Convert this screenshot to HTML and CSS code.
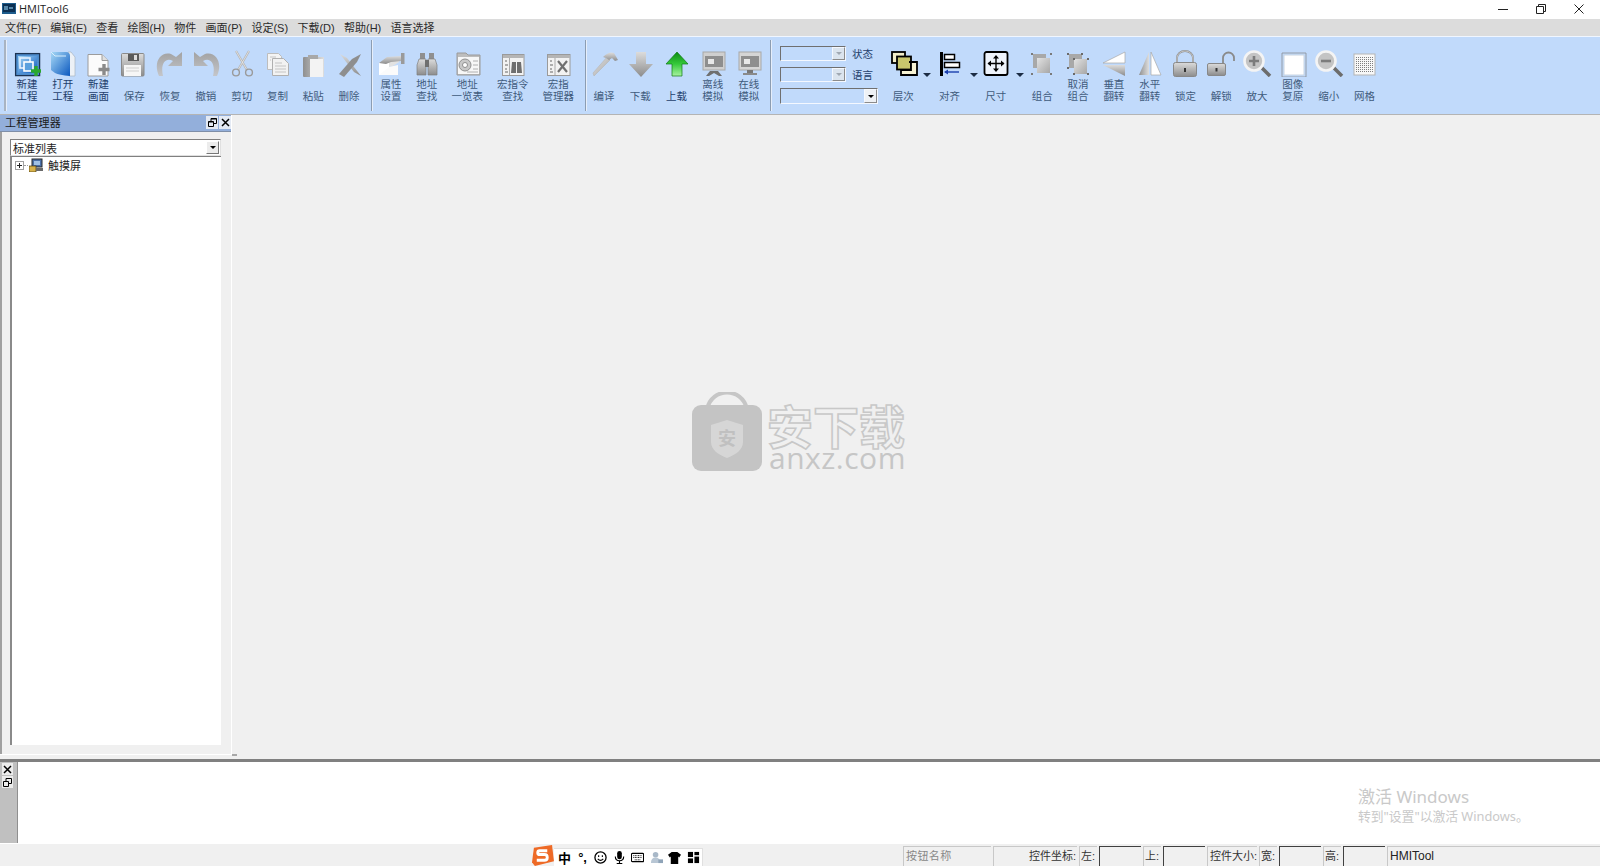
FILE: index.html
```html
<!DOCTYPE html>
<html lang="zh">
<head>
<meta charset="utf-8">
<title>HMITool6</title>
<link rel="stylesheet" href="styles.css">
</head>
<body>
<svg class="defs" aria-hidden="true">
<defs>
<linearGradient id="gGray" x1="0" y1="0" x2="0" y2="1"><stop offset="0" stop-color="#dcdcdc"/><stop offset="1" stop-color="#8c8c8c"/></linearGradient>
<linearGradient id="gArc" x1="0" y1="0" x2="0" y2="1"><stop offset="0" stop-color="#a2a2a2"/><stop offset="1" stop-color="#c4c6ca"/></linearGradient>
<linearGradient id="gSide" x1="0" y1="0" x2="1" y2="0"><stop offset="0" stop-color="#8f8f8f"/><stop offset="1" stop-color="#dedede"/></linearGradient>
<linearGradient id="gSoft" x1="0" y1="0" x2="1" y2="1"><stop offset="0" stop-color="#e2e2e2"/><stop offset="1" stop-color="#a6a6a6"/></linearGradient>
<linearGradient id="gBlue" x1="0" y1="0" x2="1" y2="1"><stop offset="0" stop-color="#a6d8f6"/><stop offset="1" stop-color="#0b58bf"/></linearGradient>
<linearGradient id="gGreen" x1="0" y1="0" x2="0" y2="1"><stop offset="0" stop-color="#0c8a12"/><stop offset=".5" stop-color="#35c93a"/><stop offset="1" stop-color="#a8f2a0"/></linearGradient>
<pattern id="pDots" width="2" height="2" patternUnits="userSpaceOnUse"><rect width="1" height="1" fill="#808080"/></pattern>

<symbol id="i-new" viewBox="0 0 32 28"><rect x="4.6" y="4.6" width="24" height="22" fill="#4f8fd0" stroke="#1c3352" stroke-width="1.3"/><rect x="7" y="7" width="19" height="17" fill="url(#gBlue)"/><rect x="9" y="9" width="10" height="10" fill="none" stroke="#e6f2ff" stroke-width="1.6"/><rect x="13" y="13" width="9" height="9" fill="#5aa0de" stroke="#fff" stroke-width="1.6"/><path d="M25 17v10M20 22h10" stroke="#2aa82e" stroke-width="3.4"/></symbol>
<symbol id="i-open" viewBox="0 0 32 28"><path d="M21 3h3l4 5v19h-6z" fill="#edf1f6" stroke="#a9b4c2" stroke-width=".7"/><path d="M4 3h15q4 0 4 4v20q-11-1-15-3l-4-3z" fill="url(#gBlue)"/><path d="M4 3l4 4h11" fill="none" stroke="#d8eefc"/></symbol>
<symbol id="i-newpage" viewBox="0 0 32 28"><path d="M6 5.5h14l6 6v15.500H6z" fill="#fbfbfb" stroke="#9c9c9c"/><path d="M20 5.500v6h6" fill="#dfdfdf" stroke="#9c9c9c"/><path d="M22 15v11M16.500 20.500h11" stroke="#8a8a8a" stroke-width="3.400"/></symbol>
<symbol id="i-save" viewBox="0 0 32 28"><rect x="3.500" y="4.500" width="22.500" height="22.500" rx="1" fill="url(#gGray)" stroke="#8a8a8a"/><rect x="10" y="5" width="11" height="7" fill="#5a5a5a"/><rect x="16" y="6" width="3" height="5" fill="#dcdcdc"/><rect x="6" y="16" width="17" height="11" fill="#f6f6f6"/><path d="M8 19h13M8 22h13" stroke="#cfcfcf"/></symbol>
<symbol id="i-redo" viewBox="0 0 32 28"><path d="M5 27C-1 14 6 2 17 5l5 3 6-5v14H14l5-5C12 8 6 14 9 27z" fill="url(#gArc)"/></symbol>
<symbol id="i-undo" viewBox="0 0 32 28"><path d="M27 27C33 14 26 2 15 5l-5 3-6-5v14h14l-5-5c7-4 13 2 10 15z" fill="url(#gArc)"/></symbol>
<symbol id="i-cut" viewBox="0 0 32 28"><path d="M10 2l11 19M23 2L12 21" stroke="#b4b4b4" stroke-width="2.200"/><path d="M10 2l11 19M23 2L12 21" stroke="#eee" stroke-width=".7"/><circle cx="10" cy="23.500" r="3.400" fill="none" stroke="#9a9a9a" stroke-width="1.400"/><circle cx="23" cy="23.500" r="3.400" fill="none" stroke="#9a9a9a" stroke-width="1.400"/></symbol>
<symbol id="i-copy" viewBox="0 0 32 28"><path d="M6.500 4.500h11l3 3v13h-14z" fill="#f4f4f4" stroke="#bdbdbd"/><path d="M11.500 9.500h11l5 5v12h-16z" fill="#f2f2f2" stroke="#b0b0b0"/><path d="M14 14h7M14 17h11M14 20h11M14 23h11M9 8h6M9 11h1" stroke="#c4c4c4"/></symbol>
<symbol id="i-paste" viewBox="0 0 32 28"><rect x="6" y="8" width="21" height="20" rx="1" fill="url(#gSide)"/><rect x="13" y="10" width="13" height="18" fill="#f3f3f3"/><rect x="11" y="6" width="10" height="4" fill="#a8a8a8"/></symbol>
<symbol id="i-del" viewBox="0 0 32 28"><path d="M7 5l7 4 14 18-7-4z" fill="url(#gGray)"/><path d="M6 25l13-15 9-5-4 8-13 15z" fill="#8e8e8e"/></symbol>
<symbol id="i-prop" viewBox="0 0 32 28"><path d="M4 14l10-3v15H4z" fill="#fff"/><path d="M14 11l10-2v4l-6 4-4 1z" fill="#e2e2e2"/><path d="M4 14l8-6 14-1v5l-10 1-5 2z" fill="url(#gGray)"/><rect x="26" y="4" width="3.500" height="11" fill="#9a9a9a"/><path d="M4 26h19V16l-9 2z" fill="#fbfbfb"/></symbol>
<symbol id="i-bino" viewBox="0 0 32 28"><rect x="9" y="4" width="5" height="7" fill="#8f8f8f"/><rect x="18" y="4" width="5" height="7" fill="#8f8f8f"/><path d="M8 10h7v16H6V16zM17 10h7l2 6v10h-9z" fill="url(#gGray)" stroke="#7f7f7f" stroke-width=".7"/><rect x="14" y="11" width="4" height="7" fill="#6f6f6f"/></symbol>
<symbol id="i-list" viewBox="0 0 32 28"><path d="M6 4h9l2 2h12v20H6z" fill="#bdbdbd" stroke="#9a9a9a"/><rect x="7" y="8" width="21" height="17" fill="#f7f7f7"/><circle cx="14" cy="16" r="6" fill="#c8c8c8" stroke="#8f8f8f"/><circle cx="14" cy="16" r="2.500" fill="#fff" stroke="#8f8f8f"/><path d="M22 12h5M22 16h5M22 20h5M16 23h11" stroke="#b0b0b0"/></symbol>
<symbol id="i-mfind" viewBox="0 0 32 28"><rect x="5.500" y="5.500" width="21.500" height="21" fill="#f2f2f2" stroke="#9a9a9a"/><rect x="6" y="6" width="21" height="3" fill="#b5b5b5"/><path d="M12.500 9v17" stroke="#aaa"/><path d="M8 12h2M8 16h3M8 20h2M8 23h3" stroke="#666"/><path d="M15 13h4v11h-5zM20 13h4l1 11h-5z" fill="#6e6e6e"/></symbol>
<symbol id="i-mmgr" viewBox="0 0 32 28"><rect x="5.500" y="5.500" width="22.500" height="21" fill="#f2f2f2" stroke="#9a9a9a"/><rect x="6" y="6" width="22" height="3" fill="#b5b5b5"/><path d="M13 9v17" stroke="#aaa"/><path d="M8 12h2M8 16h3M8 20h2M8 23h3" stroke="#666"/><path d="M16 12l9 11M25 12l-9 11" stroke="#707070" stroke-width="2.200"/></symbol>
<symbol id="i-hammer" viewBox="0 0 32 28"><path d="M6 27l-1-3L19 8l3 3z" fill="url(#gSoft)" stroke="#b5b5b5" stroke-width=".6"/><path d="M15 8q6-6 11-4l4 7-3 1-3-3-3 2-3-2z" fill="url(#gGray)"/></symbol>
<symbol id="i-down" viewBox="0 0 32 28"><path d="M12 3h10v12h7L17 28 5 15h7z" fill="url(#gGray)"/></symbol>
<symbol id="i-up" viewBox="0 0 32 28"><path d="M17 3l11 12h-6v12H12V15H6z" fill="url(#gGreen)" stroke="#0f7a14" stroke-width=".7"/></symbol>
<symbol id="i-off" viewBox="0 0 32 28"><rect x="6" y="3" width="22" height="18" fill="#cfcfcf" stroke="#a8a8a8"/><rect x="8" y="7" width="18" height="11" fill="#8e8e8e"/><rect x="11" y="10" width="6" height="5" fill="#e8e8e8"/><path d="M13 22h8l4 5h-3l-5-3-5 3H9z" fill="#6f6f6f"/></symbol>
<symbol id="i-on" viewBox="0 0 32 28"><rect x="6" y="3" width="22" height="18" fill="#d5d5d5" stroke="#a8a8a8"/><rect x="8" y="7" width="18" height="11" fill="#8e8e8e"/><rect x="11" y="10" width="6" height="5" fill="#e8e8e8"/><rect x="14" y="21" width="6" height="3" fill="#777"/><rect x="10" y="24" width="14" height="2" fill="#8a8a8a"/></symbol>
<symbol id="i-layer" viewBox="0 0 32 28"><rect x="5" y="3" width="13" height="11" fill="#f2eeca" stroke="#000" stroke-width="1.800"/><rect x="10" y="7.500" width="14" height="13" fill="#c9c76c" stroke="#000" stroke-width="1.800"/><path d="M22 13h8v13H14v-5h10v-8z" fill="#f7f3d4" stroke="#000" stroke-width="1.800"/></symbol>
<symbol id="i-align" viewBox="0 0 32 28"><rect x="7" y="3" width="3" height="24" fill="#000"/><rect x="11.500" y="5.500" width="10" height="5" fill="#fff" stroke="#000" stroke-width="1.500"/><rect x="11.500" y="13.500" width="15" height="5" fill="#fff" stroke="#000" stroke-width="1.500"/><path d="M12 23h14" stroke="#1b3fae" stroke-width="1.400"/><path d="M11 23l4-2.500v5z" fill="#1b3fae"/></symbol>
<symbol id="i-size" viewBox="0 0 32 28"><rect x="4.500" y="3" width="23" height="23" rx="2" fill="#eef3fb" stroke="#000" stroke-width="1.800"/><path d="M16 7v15M8.500 14.500h15" stroke="#000" stroke-width="1.400"/><path d="M16 6l3 3.500h-6zM16 23l3-3.500h-6zM7.500 14.500l3.500-3v6zM24.500 14.500l-3.500-3v6z" fill="#000"/></symbol>
<symbol id="i-group" viewBox="0 0 32 28"><rect x="7" y="5" width="13" height="14" fill="#a8a8a8"/><rect x="11" y="9" width="13" height="15" fill="url(#gSoft)"/><path d="M5 4h2v2H5zM24 4h2v2h-2zM5 24h2v2H5zM24 24h2v2h-2z" fill="#7a7a7a"/></symbol>
<symbol id="i-ungroup" viewBox="0 0 32 28"><rect x="7" y="5" width="13" height="14" fill="#a8a8a8"/><rect x="12" y="10" width="13" height="15" fill="url(#gSoft)"/><path d="M5 4h2v2H5zM19 4h2v2h-2zM5 18h2v2H5zM11 9h2v2h-2zM25 9h2v2h-2zM11 24h2v2h-2zM25 24h2v2h-2z" fill="#6a6a6a"/></symbol>
<symbol id="i-vflip" viewBox="0 0 32 28"><path d="M27 3v11H5z" fill="#fff" stroke="#a8a8a8" stroke-width=".7"/><path d="M5 16h22v11z" fill="url(#gGray)"/></symbol>
<symbol id="i-hflip" viewBox="0 0 32 28"><path d="M15 3v23H5z" fill="url(#gSide)"/><path d="M17 3v23h10z" fill="#fff" stroke="#a8a8a8" stroke-width=".7"/></symbol>
<symbol id="i-lock" viewBox="0 0 32 28"><path d="M8 14V9a8 7 0 0 1 16 0v5" fill="none" stroke="#8a8a8a" stroke-width="1.800"/><path d="M8 14V9a8 7 0 0 1 16 0v5" fill="none" stroke="#dedede" stroke-width=".7"/><rect x="4.500" y="13.500" width="23" height="14" rx="2" fill="url(#gGray)" stroke="#888"/><rect x="15" y="19" width="2" height="4" fill="#333"/></symbol>
<symbol id="i-unlock" viewBox="0 0 32 28"><path d="M18 15V9a5.500 5.500 0 0 1 11 0v3" fill="none" stroke="#8a8a8a" stroke-width="1.800"/><rect x="2.500" y="14.500" width="18" height="12" rx="1.500" fill="url(#gGray)" stroke="#888"/><rect x="10.500" y="19" width="2" height="3.500" fill="#333"/></symbol>
<symbol id="i-zin" viewBox="0 0 32 28"><path d="M20 18l9 9" stroke="#6c6c6c" stroke-width="3.500"/><circle cx="13" cy="12" r="9.500" fill="#c4c4c4" stroke="#f4f4f4" stroke-width="2.600"/><path d="M13 7v10M8 12h10" stroke="#7c7c7c" stroke-width="2.600"/></symbol>
<symbol id="i-zout" viewBox="0 0 32 28"><path d="M20 18l9 9" stroke="#6c6c6c" stroke-width="3.500"/><circle cx="13" cy="12" r="9.500" fill="#c4c4c4" stroke="#f4f4f4" stroke-width="2.600"/><path d="M8 12h10" stroke="#7c7c7c" stroke-width="2.600"/></symbol>
<symbol id="i-fit" viewBox="0 0 32 28"><rect x="7" y="6" width="20" height="20" fill="#fff" stroke="#c8d4e2"/><path d="M5 4h24M5 28h24M5 4v24M29 4v24" stroke="#8f959c" stroke-width=".9"/></symbol>
<symbol id="i-grid" viewBox="0 0 32 28"><rect x="6" y="5" width="21" height="21" fill="#f8f8f8" stroke="#b5b5b5"/><rect x="8" y="7" width="17" height="17" fill="url(#pDots)"/></symbol>
</defs>
</svg>

<div class="app">
  <header class="titlebar">
    <svg class="appicon" viewBox="0 0 14 11"><rect width="14" height="11" fill="#1d5c8c"/><rect x="1" y="1" width="12" height="8" fill="#0c2f52"/><path d="M3 3v4M5 3v4M7 5h4" stroke="#9fe0ff"/></svg>
    <span class="apptitle">HMITool6</span>
    <div class="winctl">
      <svg class="winbtn" viewBox="0 0 10 10"><path d="M0 5.500h10" stroke="#222"/></svg>
      <svg class="winbtn" viewBox="0 0 10 10"><path d="M.5 2.500h7v7h-7zM2.500 2.500v-2h7v7h-2" fill="none" stroke="#222"/></svg>
      <svg class="winbtn" viewBox="0 0 10 10"><path d="M.5.500l9 9M9.500.500l-9 9" stroke="#222"/></svg>
    </div>
  </header>

  <nav class="menubar">
    <span>文件(F)</span><span>编辑(E)</span><span>查看</span><span>绘图(H)</span><span>物件</span><span>画面(P)</span><span>设定(S)</span><span>下载(D)</span><span>帮助(H)</span><span>语言选择</span>
  </nav>

  <section class="toolbar">
    <div class="grip"></div>
    <div class="group g1">
      <div class="btn"><svg class="ico"><use href="#i-new"/></svg><span class="lbl on">新建<br>工程</span></div>
      <div class="btn"><svg class="ico"><use href="#i-open"/></svg><span class="lbl on">打开<br>工程</span></div>
      <div class="btn"><svg class="ico"><use href="#i-newpage"/></svg><span class="lbl on">新建<br>画面</span></div>
      <div class="btn"><svg class="ico"><use href="#i-save"/></svg><span class="lbl">保存</span></div>
      <div class="btn"><svg class="ico"><use href="#i-redo"/></svg><span class="lbl">恢复</span></div>
      <div class="btn"><svg class="ico"><use href="#i-undo"/></svg><span class="lbl">撤销</span></div>
      <div class="btn"><svg class="ico"><use href="#i-cut"/></svg><span class="lbl">剪切</span></div>
      <div class="btn"><svg class="ico"><use href="#i-copy"/></svg><span class="lbl">复制</span></div>
      <div class="btn"><svg class="ico"><use href="#i-paste"/></svg><span class="lbl">粘贴</span></div>
      <div class="btn"><svg class="ico"><use href="#i-del"/></svg><span class="lbl">删除</span></div>
    </div>
    <div class="sep"></div>
    <div class="group g2">
      <div class="btn"><svg class="ico"><use href="#i-prop"/></svg><span class="lbl">属性<br>设置</span></div>
      <div class="btn"><svg class="ico"><use href="#i-bino"/></svg><span class="lbl">地址<br>查找</span></div>
      <div class="btn mid"><svg class="ico"><use href="#i-list"/></svg><span class="lbl">地址<br>一览表</span></div>
      <div class="btn mid"><svg class="ico"><use href="#i-mfind"/></svg><span class="lbl">宏指令<br>查找</span></div>
      <div class="btn mid"><svg class="ico"><use href="#i-mmgr"/></svg><span class="lbl">宏指<br>管理器</span></div>
    </div>
    <div class="sep"></div>
    <div class="group g3">
      <div class="btn"><svg class="ico"><use href="#i-hammer"/></svg><span class="lbl">编译</span></div>
      <div class="btn"><svg class="ico"><use href="#i-down"/></svg><span class="lbl">下载</span></div>
      <div class="btn"><svg class="ico"><use href="#i-up"/></svg><span class="lbl on">上载</span></div>
      <div class="btn"><svg class="ico"><use href="#i-off"/></svg><span class="lbl">离线<br>模拟</span></div>
      <div class="btn"><svg class="ico"><use href="#i-on"/></svg><span class="lbl">在线<br>模拟</span></div>
    </div>
    <div class="sep"></div>
    <div class="combos">
      <div class="comborow"><div class="tbcombo"><span class="tbdrop"></span></div><span class="clbl">状态</span></div>
      <div class="comborow"><div class="tbcombo"><span class="tbdrop"></span></div><span class="clbl">语言</span></div>
      <div class="comborow"><div class="tbcombo long"><span class="tbdrop black"></span></div></div>
    </div>
    <div class="group g4">
      <div class="btn wide drop"><svg class="ico"><use href="#i-layer"/></svg><span class="lbl">层次</span></div>
      <div class="btn wide drop"><svg class="ico"><use href="#i-align"/></svg><span class="lbl">对齐</span></div>
      <div class="btn wide drop"><svg class="ico"><use href="#i-size"/></svg><span class="lbl">尺寸</span></div>
    </div>
    <div class="group g5">
      <div class="btn"><svg class="ico"><use href="#i-group"/></svg><span class="lbl">组合</span></div>
      <div class="btn"><svg class="ico"><use href="#i-ungroup"/></svg><span class="lbl">取消<br>组合</span></div>
      <div class="btn"><svg class="ico"><use href="#i-vflip"/></svg><span class="lbl">垂直<br>翻转</span></div>
      <div class="btn"><svg class="ico"><use href="#i-hflip"/></svg><span class="lbl">水平<br>翻转</span></div>
      <div class="btn"><svg class="ico"><use href="#i-lock"/></svg><span class="lbl">锁定</span></div>
      <div class="btn"><svg class="ico"><use href="#i-unlock"/></svg><span class="lbl">解锁</span></div>
      <div class="btn"><svg class="ico"><use href="#i-zin"/></svg><span class="lbl">放大</span></div>
      <div class="btn"><svg class="ico"><use href="#i-fit"/></svg><span class="lbl">图像<br>复原</span></div>
      <div class="btn"><svg class="ico"><use href="#i-zout"/></svg><span class="lbl">缩小</span></div>
      <div class="btn"><svg class="ico"><use href="#i-grid"/></svg><span class="lbl">网格</span></div>
    </div>
  </section>

  <main class="mainrow">
    <aside class="panel">
      <div class="paneltitle">
        <span class="paneltext">工程管理器</span>
        <span class="panelbtn"><svg viewBox="0 0 9 9"><path d="M.5 3.500h5v5h-5zM3 3.500v-3h5.500v5h-3" fill="none" stroke="#000"/><path d="M3 1h5.500M.5 4h5" stroke="#000"/></svg></span>
        <span class="panelbtn"><svg viewBox="0 0 9 9"><path d="M1 1l7 7M8 1L1 8" stroke="#000" stroke-width="1.500"/></svg></span>
      </div>
      <div class="panelbody">
        <div class="listcombo"><span class="listtext">标准列表</span><span class="listdrop"></span></div>
        <div class="tree">
          <div class="treerow">
            <svg class="expander" viewBox="0 0 9 9"><rect x=".5" y=".5" width="8" height="8" fill="#fff" stroke="#a0a0a0"/><path d="M2 4.500h5M4.500 2v5" stroke="#222"/></svg>
            <span class="treedots"></span>
            <svg class="treeico" viewBox="0 0 14 14"><rect x="3" y="1" width="10" height="8" fill="#4a6fa8" stroke="#2a2a2a"/><rect x="5" y="3" width="6" height="4" fill="#9fc0e6"/><rect x="0" y="8" width="7" height="6" fill="#d8b24a" stroke="#4a3a10" stroke-width=".7"/><rect x="7" y="10" width="7" height="3" fill="#6a6a6a"/></svg>
            <span class="treetext">触摸屏</span>
          </div>
        </div>
      </div>
    </aside>
    <div class="work">
      <span class="splitgrip"></span>
      <div class="watermark">
        <svg class="wmbag" viewBox="0 0 70 80"><path d="M15 17C20 -5 50 -5 55 17" fill="none" stroke="#c6c6c6" stroke-width="4"/><rect y="13" width="70" height="66" rx="9" fill="#c4c4c4"/><path d="M35 28l16 5v17c0 8-8 13-16 16-8-3-16-8-16-16V33z" fill="#d6d6d6"/></svg>
        <span class="wmshieldtext">安</span>
        <div class="wmtext">
          <span class="wmcn">安下载</span>
          <span class="wmen">anxz.com</span>
        </div>
      </div>
    </div>
  </main>

  <section class="output">
    <div class="outtab">
      <span class="outbtn"><svg viewBox="0 0 9 9"><path d="M1 1l7 7M8 1L1 8" stroke="#000" stroke-width="1.500"/></svg></span>
      <span class="outbtn"><svg viewBox="0 0 9 9"><path d="M.5 3.500h5v5h-5zM3 3.500v-3h5.500v5h-3" fill="none" stroke="#000"/></svg></span>
    </div>
    <div class="outarea"></div>
    <div class="activate">
      <div class="act1">激活 Windows</div>
      <div class="act2">转到"设置"以激活 Windows。</div>
    </div>
  </section>

  <footer class="status">
    <div class="spacer"></div>
    <span class="field fname">按钮名称</span>
    <span class="field fcoord">控件坐标:</span>
    <span class="field fshort">左:</span><span class="input"></span>
    <span class="field fshort">上:</span><span class="input"></span>
    <span class="field fctl">控件大小:</span>
    <span class="field fshort">宽:</span><span class="input"></span>
    <span class="field fshort">高:</span><span class="input"></span>
    <span class="field fapp">HMITool</span>
  </footer>

  <div class="ime">
    <svg class="imelogo" viewBox="0 0 24 22"><path d="M3 3l19-3 2 17-20 5-3-4z" fill="#ee6a26"/><path d="M17 6H9q-2 0-2 2t2 2h5q3 0 3 3t-3 3H6" fill="none" stroke="#fff" stroke-width="3"/></svg>
    <div class="imebar">
      <span class="imech">中</span>
      <span class="imech punct">°,</span>
      <svg class="imeico" viewBox="0 0 14 14"><circle cx="7" cy="7" r="6" fill="none" stroke="#000" stroke-width="1.400"/><path d="M5 4.500v2M9 4.500v2M4 8.500q3 3 6 0" fill="none" stroke="#000" stroke-width="1.200"/></svg>
      <svg class="imeico" viewBox="0 0 14 14"><rect x="4.500" y="0" width="5" height="9" rx="2.500"/><path d="M2.500 6q0 4.500 4.500 4.500T11.500 6M7 10v3M4 13.500h6" fill="none" stroke="#000" stroke-width="1.200"/></svg>
      <svg class="imeico" viewBox="0 0 14 14"><rect x=".5" y="2.500" width="13" height="9" rx="1" fill="none" stroke="#000" stroke-width="1.200"/><path d="M2.500 5h9M2.500 7h9M4 9.500h6" stroke="#000" stroke-dasharray="1 .7"/></svg>
      <svg class="imeico" viewBox="0 0 14 14"><circle cx="6" cy="4" r="3" fill="#a8b8c8"/><path d="M1 13q0-6 5-6t5 6z" fill="#b8c6d4"/><rect x="9" y="9" width="5" height="4" fill="#8fa4b8"/></svg>
      <svg class="imeico" viewBox="0 0 14 14"><path d="M4 1h6l4 3-2 3-1-1v8H3V6L2 7 0 4z"/></svg>
      <svg class="imeico" viewBox="0 0 14 14"><rect x="1" y="1" width="5.500" height="5.500"/><rect x="8" y="1" width="5" height="3.500"/><rect x="1" y="8" width="5.500" height="5"/><rect x="8" y="6" width="5" height="7"/></svg>
    </div>
  </div>
</div>
</body>
</html>
```
FILE: styles.css
```css
* { box-sizing: border-box; }
html, body { margin: 0; padding: 0; height: 100%; overflow: hidden; }
body {
  font-family: "Liberation Sans", "Noto Sans CJK SC", sans-serif;
  font-size: 11px;
  color: #222;
  background: #f0f0f0;
}
.defs { position: absolute; width: 0; height: 0; }
.app { position: relative; display: flex; flex-direction: column; width: 1600px; height: 866px; }

/* title bar */
.titlebar { display: flex; align-items: center; height: 19px; background: #fff; padding: 0 0 2px 2px; flex: none; }
.appicon { width: 14px; height: 11px; margin-right: 3px; }
.apptitle { font-family: "Open Sans", sans-serif; font-size: 11px; color: #222; }
.winctl { display: flex; margin-left: auto; margin-right: 16px; gap: 28px; }
.winbtn { width: 10px; height: 10px; }

/* menu */
.menubar { display: flex; align-items: center; gap: 9.300px; height: 17px; background: #dcdcdc; padding: 0 0 2px 5px; flex: none; font-size: 11px; color: #2a2a2a; }

/* toolbar */
.toolbar { display: flex; align-items: stretch; height: 79px; flex: none; background: #c1dafb; border-top: 1px solid #f0f6ff; border-bottom: 1px solid #b4b4b4; }
.grip { width: 3px; margin: 3px 2px 3px 4px; background: #a9b4c2; border-right: 1px solid #e6eefa; flex: none; }
.group { display: flex; flex: none; }
.g1 { width: 361.500px; }
.g2 { width: 213.500px; padding-left: 1.500px; }
.g3 { width: 184px; }
.g3 .btn { width: 36.200px; }
.g5 { margin-left: 5.500px; }
.sep { width: 1px; margin: 3px 0; background: #8c9db2; box-shadow: 1px 0 0 #e6eefa; flex: none; }
.btn { position: relative; display: flex; flex-direction: column; align-items: center; width: 35.800px; flex: none; padding-top: 12px; }
.btn.wide { width: 46.300px; }
.btn.mid { width: 45.500px; }
.ico { display: block; width: 32px; height: 28px; flex: none; overflow: visible; }
.lbl { display: flex; flex-direction: column; justify-content: flex-end; align-items: center; height: 25px; font-size: 10.500px; line-height: 11.500px; text-align: center; color: #3f5a7c; white-space: nowrap; }
.lbl.on { color: #1f3f6b; }
.clbl { font-size: 10.500px; color: #1f3f6b; white-space: nowrap; }
.drop::after { content: ""; position: absolute; right: -5px; top: 36px; border: 4px solid transparent; border-top: 4px solid #1c2c44; border-bottom: 0; }

/* toolbar combos */
.combos { display: flex; flex-direction: column; width: 109px; padding: 9px 0 0 9px; gap: 6px; flex: none; }
.comborow { display: flex; align-items: center; gap: 6px; height: 15px; }
.tbcombo { position: relative; width: 66px; height: 15px; border: 1px solid; border-color: #6f6f6f #f4f8ff #f4f8ff #6f6f6f; }
.tbcombo.long { width: 98px; height: 16px; margin-top: 1px; }
.tbdrop { position: absolute; right: 0; top: 0; bottom: 0; width: 13px; background: #dbe4ee; border: 1px solid; border-color: #f4f8ff #8b8b8b #8b8b8b #f4f8ff; display: flex; align-items: center; justify-content: center; }
.tbdrop::after { content: ""; border: 3px solid transparent; border-top: 3px solid #a0a8b2; border-bottom: 0; }
.tbdrop.black { background: #eef1f5; }
.tbdrop.black::after { border-top-color: #000; }

/* main */
.mainrow { display: flex; flex: 1; min-height: 0; }
.panel { display: flex; flex-direction: column; width: 232px; flex: none; margin-bottom: 4px; border-right: 1px solid #fff; border-bottom: 1px solid #fff; }
.paneltitle { display: flex; align-items: center; height: 17px; flex: none; padding-bottom: 2px; background: #93afdb; gap: 1px; border-bottom: 1px solid #7f8fa8; }
.paneltext { flex: 1; padding-left: 5px; font-size: 11px; letter-spacing: .2px; color: #1a1a1a; }
.panelbtn { display: flex; align-items: center; justify-content: center; width: 12px; height: 13px; background: #e4eaf4; }
.panelbtn svg, .outbtn svg { width: 9px; height: 9px; }
.panelbody { display: flex; flex-direction: column; flex: 1; min-height: 0; padding: 7px 10px 9px 8px; border-left: 2px solid #a0a0a0; }
.listcombo { position: relative; display: flex; align-items: center; height: 17px; flex: none; background: #fff; border: 1px solid; border-color: #808080 #e0e0e0 #e0e0e0 #808080; padding-left: 2px; }
.listtext { font-size: 11px; color: #222; }
.listdrop { position: absolute; right: 1px; top: 1px; bottom: 1px; width: 13px; background: #ececec; border: 1px solid; border-color: #fff #777 #777 #fff; display: flex; align-items: center; justify-content: center; }
.listdrop::after { content: ""; border: 3px solid transparent; border-top: 3px solid #000; border-bottom: 0; }
.tree { flex: 1; min-height: 0; background: #fff; border-top: 1px solid #808080; border-left: 2px solid #8a8a8a; padding: 1px 0 0 3px; }
.treerow { display: flex; align-items: center; height: 14px; }
.expander { width: 9px; height: 9px; flex: none; }
.treedots { width: 4px; border-top: 1px dotted #a0a0a0; flex: none; margin-right: 1px; }
.treeico { width: 14px; height: 14px; flex: none; }
.treetext { margin-left: 5px; font-size: 11px; color: #222; }

.work { position: relative; flex: 1; background: #f0f0f0; }
.splitgrip { position: absolute; left: 0; bottom: 3px; width: 5px; height: 2px; background: #a8a8a8; }
.watermark { position: absolute; left: 460px; top: 277px; display: flex; align-items: flex-start; }
.wmbag { width: 70px; height: 80px; flex: none; }
.wmshieldtext { position: absolute; left: 26px; top: 35px; font-family: "Noto Sans CJK SC", sans-serif; font-size: 18px; line-height: 20px; color: #c0c0c0; font-weight: 700; }
.wmtext { display: flex; flex-direction: column; margin: 11px 0 0 5px; }
.wmcn { font-family: "Noto Sans CJK SC", sans-serif; font-size: 46px; line-height: 42px; font-weight: 700; color: #f0f0f0; -webkit-text-stroke: 1.600px #c8c8c8; white-space: nowrap; }
.wmen { font-family: "Open Sans", sans-serif; font-size: 30px; line-height: 25px; margin-left: 2px; color: #c6c6c6; letter-spacing: .5px; }

/* output */
.output { position: relative; display: flex; height: 84px; flex: none; border-top: 3px solid #808080; }
.outtab { display: flex; flex-direction: column; width: 18px; flex: none; padding: 1px 0 0 2px; gap: 1px; background: #c0c0c0; border-right: 1px solid #8f8f8f; }
.outbtn { display: flex; align-items: center; justify-content: center; width: 11px; height: 12px; background: #ececec; }
.outarea { flex: 1; background: #fff; }
.activate { position: absolute; left: 1358px; top: 23px; color: #c9c9c9; }
.act1 { font-family: "Noto Sans", "Noto Sans CJK SC", sans-serif; font-size: 17px; line-height: 24px; }
.act2 { font-family: "Noto Sans", "Noto Sans CJK SC", sans-serif; font-size: 12.800px; line-height: 15px; white-space: nowrap; }

/* status */
.status { display: flex; align-items: stretch; height: 23px; flex: none; padding-top: 2px; gap: 2px; background: #f0f0f0; border-top: 1px solid #fff; line-height: 18px; font-size: 11px; color: #333; }
.spacer { flex: 1; }
.field { border-top: 1px solid #c8c8c8; border-left: 1px solid #c8c8c8; white-space: nowrap; padding-left: 2px; flex: none; }
.fname { width: 88px; color: #888; letter-spacing: .4px; }
.fcoord { width: 84px; text-align: right; padding-right: 1px; }
.fshort { width: 18px; padding-left: 1px; }
.fctl { width: 50px; }
.input { width: 42px; flex: none; border-top: 1px solid #404040; border-left: 1px solid #404040; }
.fapp { width: 213px; font-size: 12px; color: #222; }

/* IME */
.ime { position: absolute; left: 530px; top: 845px; display: flex; align-items: flex-end; }
.imelogo { width: 25px; height: 21px; flex: none; margin-right: -1px; position: relative; z-index: 1; }
.imebar { display: flex; align-items: center; justify-content: space-between; width: 149px; height: 18px; padding: 0 2px 0 4px; background: #fff; border-top: 1px solid #e0e0e0; border-right: 1px solid #e0e0e0; }
.imech { font-family: "Noto Sans CJK SC", sans-serif; font-size: 13px; line-height: 16px; font-weight: 700; color: #000; }
.imech.punct { font-family: "Liberation Sans", sans-serif; min-width: 12px; text-align: center; }
.imeico { width: 13px; height: 13px; flex: none; }
```
